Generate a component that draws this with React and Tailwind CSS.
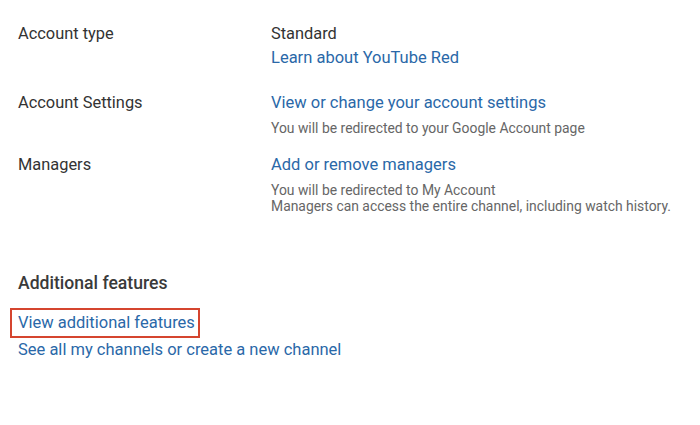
import React from 'react';

const font = { fontFamily: 'Roboto, "Liberation Sans", Arial, sans-serif' };

const Row = ({ label, children, className = '' }) => (
  <div className={`grid grid-cols-[253px_1fr] ${className}`}>
    <div className="text-[16.4px] leading-[24px] text-[#333]">{label}</div>
    <div>{children}</div>
  </div>
);

const Link = ({ children }) => (
  <a href="#" className="block text-[16.5px] leading-[24px] text-[#2a68a8]">{children}</a>
);

const Note = ({ children }) => (
  <div className="text-[13.9px] leading-[16px] text-[#666]">{children}</div>
);

export default function App() {
  return (
    <div className="w-[700px] h-[425px] bg-white overflow-hidden" style={font}>
      <div className="pl-[18px] pt-[22px]">
        <Row label="Account type">
          <div className="text-[16.4px] leading-[24px] text-[#333]">Standard</div>
          <Link>Learn about YouTube Red</Link>
        </Row>

        <Row label="Account Settings" className="mt-[21px]">
          <Link>View or change your account settings</Link>
          <div className="mt-[5px]">
            <Note>You will be redirected to your Google Account page</Note>
          </div>
        </Row>

        <Row label="Managers" className="mt-[17px]">
          <Link>Add or remove managers</Link>
          <div className="mt-[5px]">
            <Note>You will be redirected to My Account</Note>
            <Note>Managers can access the entire channel, including watch history.</Note>
          </div>
        </Row>
      </div>

      <div className="mt-[57px]">
        <h2 className="pl-[18px] text-[17.6px] leading-[24px] font-medium text-[#3a3a3a]">Additional features</h2>
        <div className="pl-[10px] mt-[13px]">
          <div className="inline-block border-2 border-[#d5452f] pl-[6px] pr-[3px] py-[1px]">
            <a href="#" className="block text-[16.5px] leading-[24px] text-[#2a68a8]">View additional features</a>
          </div>
        </div>
        <div className="pl-[18px]">
          <a href="#" className="block text-[16.5px] leading-[24px] text-[#2a68a8]">See all my channels or create a new channel</a>
        </div>
      </div>
    </div>
  );
}
